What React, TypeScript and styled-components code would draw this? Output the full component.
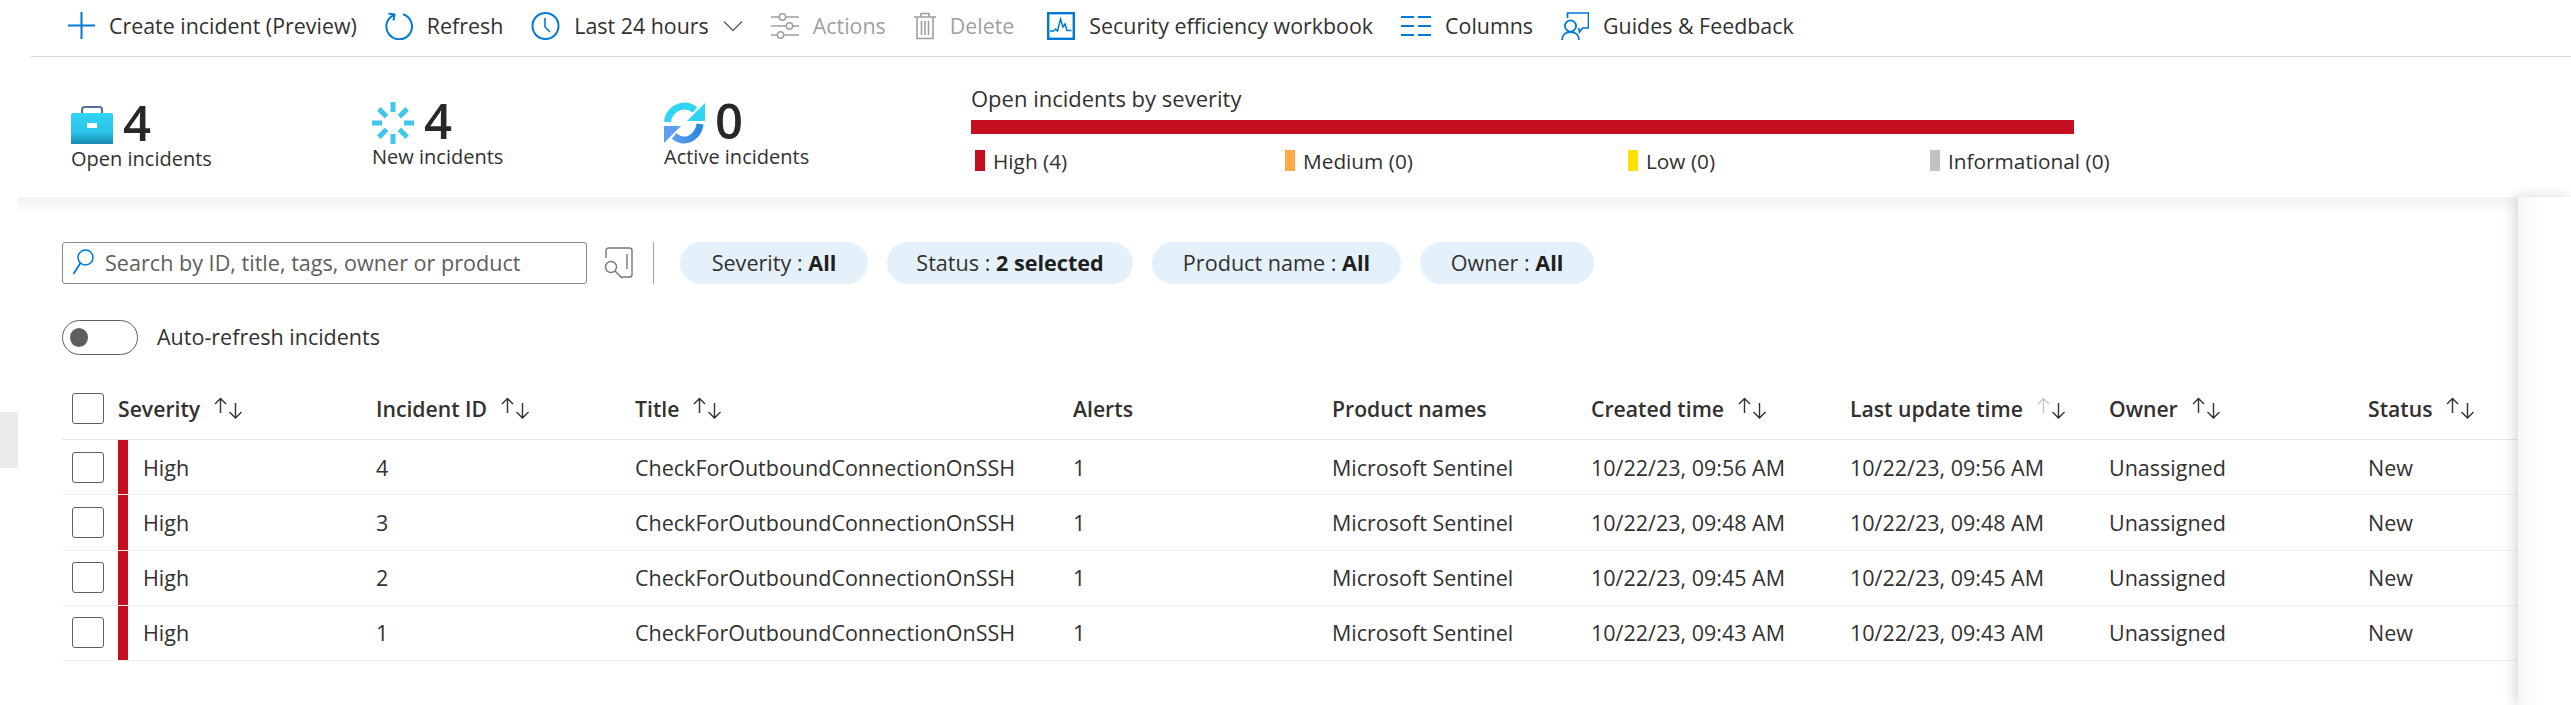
import React, { ReactNode } from 'react';
import styled, { createGlobalStyle } from 'styled-components';

const GlobalStyle = createGlobalStyle`
	html, body {
		margin: 0;
		padding: 0;
		background: #fff;
	}
	body {
		font-family: 'Open Sans', 'Noto Sans', 'Liberation Sans', sans-serif;
		color: #323130;
	}
`;

const BLUE = '#0078d4';
const GREY = '#a19f9d';

const Page = styled.div`
	width: 2571px;
	height: 705px;
	overflow: hidden;
	display: flex;
	flex-direction: column;
`;

const Toolbar = styled.div`
	height: 57px;
	margin-left: 31px;
	padding: 0 0 5px 37px;
	box-sizing: border-box;
	display: flex;
	align-items: center;
	gap: 28px;
	border-bottom: 1px solid #d9d9d9;
`;

const ToolButton = styled.div<{ $disabled?: boolean; $trail?: number }>`
	display: flex;
	align-items: center;
	gap: 14px;
	margin-right: ${props => props.$trail || 0}px;
	font-size: 21.4px;
	white-space: nowrap;
	color: ${props => (props.$disabled ? GREY : '#323130')};
	svg {
		display: block;
		flex: none;
	}
`;

const SummaryBand = styled.div`
	height: 140px;
	display: flex;
	padding-left: 71px;
`;

const Stat = styled.div<{ $width: number; $top: number }>`
	width: ${props => props.$width}px;
	padding-top: ${props => props.$top}px;
	box-sizing: border-box;
`;

const StatTop = styled.div`
	display: flex;
	align-items: center;
	gap: 10px;
	height: 46px;
`;

const StatNumber = styled.div`
	font-size: 49px;
	font-weight: 550;
	line-height: 46px;
	padding-bottom: 6px;
	color: #292827;
`;

const StatLabel = styled.div`
	font-size: 20px;
	line-height: 24px;
	margin-top: -1px;
	white-space: nowrap;
`;

const SeverityChart = styled.div`
	padding-top: 28px;
`;

const ChartTitle = styled.div`
	font-size: 22px;
	font-weight: 500;
	line-height: 26px;
`;

const ChartBar = styled.div`
	width: 1103px;
	height: 14px;
	margin-top: 9px;
	background: #c50f1f;
`;

const Legend = styled.div`
	display: flex;
	margin-top: 16px;
	padding-left: 4px;
`;

const LegendItem = styled.div<{ $width: number }>`
	width: ${props => props.$width}px;
	display: flex;
	align-items: center;
	gap: 8px;
	font-size: 20.8px;
	height: 21px;
	white-space: nowrap;
`;

const Swatch = styled.span<{ $color: string }>`
	width: 10px;
	height: 21px;
	background: ${props => props.$color};
`;

const Body = styled.div`
	flex: 1;
	display: flex;
	min-height: 0;
`;

const Gutter = styled.div`
	width: 18px;
	padding-top: 215px;
	flex: none;
`;

const GutterTab = styled.div`
	height: 56px;
	background: #edebe9;
`;

const Content = styled.div`
	width: 2500px;
	flex: none;
	padding: 45px 0 0 44px;
	box-sizing: border-box;
	background: linear-gradient(#f3f3f3, #fff 18px);
`;

const Rail = styled.div`
	flex: 1;
	position: relative;
	box-shadow: -3px 0 12px rgba(0, 0, 0, 0.16);
	background: linear-gradient(to right, #f6f6f6, #fbfbfb 10px, #fff 26px);
`;

const FilterRow = styled.div`
	display: flex;
	align-items: center;
	height: 42px;
`;

const SearchBox = styled.div`
	width: 525px;
	height: 42px;
	box-sizing: border-box;
	border: 1px solid #8a8886;
	border-radius: 3px;
	display: flex;
	align-items: center;
	gap: 11px;
	padding: 0 0 2px 9px;
	font-size: 21.6px;
	color: #605e5c;
	white-space: nowrap;
`;

const QueryIcon = styled.div`
	margin-left: 17px;
	display: flex;
`;

const FilterDivider = styled.div`
	width: 1px;
	height: 42px;
	background: #a19f9d;
	margin: 0 26px 0 19px;
`;

const Pills = styled.div`
	display: flex;
	gap: 19px;
`;

const Pill = styled.div<{ $width: number }>`
	width: ${props => props.$width}px;
	height: 42px;
	box-sizing: border-box;
	padding-bottom: 2px;
	border-radius: 21px;
	background: #e5f1fa;
	display: flex;
	align-items: center;
	justify-content: center;
	font-size: 21.6px;
	white-space: pre;
	b {
		font-weight: 700;
		color: #201f1e;
	}
`;

const ToggleRow = styled.div`
	display: flex;
	align-items: center;
	gap: 19px;
	height: 35px;
	margin-top: 36px;
	font-size: 21.5px;
`;

const ToggleLabel = styled.span`
	padding-bottom: 2px;
`;

const ToggleTrack = styled.div`
	width: 76px;
	height: 35px;
	box-sizing: border-box;
	border: 1px solid #605e5c;
	border-radius: 18px;
	display: flex;
	align-items: center;
	padding-left: 7px;
`;

const ToggleThumb = styled.div`
	width: 18px;
	height: 19px;
	border-radius: 50%;
	background: #605e5c;
`;

const COLUMNS = '56px 258px 259px 438px 259px 259px 259px 259px 259px 150px';

const HeaderRow = styled.div`
	display: grid;
	grid-template-columns: ${COLUMNS};
	height: 63px;
	margin-top: 22px;
	box-sizing: border-box;
	border-bottom: 1px solid #e8e8e8;
	align-items: center;
	font-size: 21.2px;
	font-weight: 600;
`;

const HeaderCell = styled.div`
	display: flex;
	align-items: center;
	gap: 13px;
	white-space: nowrap;
`;

const TableRow = styled.div`
	display: grid;
	grid-template-columns: ${COLUMNS};
	height: 55.25px;
	box-sizing: border-box;
	border-bottom: 1px solid #f0f0f0;
	align-items: center;
	font-size: 21.5px;
	white-space: nowrap;
`;

const CheckCell = styled.div`
	padding-left: 10px;
	display: flex;
	align-items: center;
`;

const CheckBox = styled.div`
	width: 32px;
	height: 31px;
	box-sizing: border-box;
	border: 1px solid #605e5c;
	border-radius: 3px;
`;

const SeverityCell = styled.div`
	align-self: stretch;
	display: flex;
	align-items: center;
	gap: 15px;
`;

const SeverityBar = styled.span`
	width: 10px;
	align-self: stretch;
	background: #c50f1f;
`;

function Icon(props: { w?: number; h?: number; children: ReactNode }) {
	const w = props.w || 28;
	const h = props.h || 28;
	return (
		<svg width={w} height={h} viewBox={`0 0 ${w} ${h}`} fill="none">
			{props.children}
		</svg>
	);
}

function SortArrows(props: { faded?: boolean }) {
	return (
		<svg width="30" height="22" viewBox="0 0 30 22" fill="none" strokeWidth="1.4">
			<path
				d="M7.5 16V1.5M2 7l5.5-5.5L13 7"
				stroke={props.faded ? '#c8c6c4' : '#323130'}
			/>
			<path d="M22.5 6v15M16.5 15l6 6 6-6" stroke="#323130" />
		</svg>
	);
}

const toolItems: {
	label: string;
	disabled?: boolean;
	trail?: number;
	icon: ReactNode;
	after?: ReactNode;
}[] = [
	{
		label: 'Create incident (Preview)',
		icon: (
			<Icon w={27}>
				<path d="M0 13.5h27M13.5 0v27" stroke={BLUE} strokeWidth="2" />
			</Icon>
		),
	},
	{
		label: 'Refresh',
		icon: (
			<Icon>
				<path d="M9 2.8A12.8 12.8 0 1 0 18 2.3" stroke={BLUE} strokeWidth="2" />
				<path d="M3.5 1.5 9.5 2.6 8.5 8.5" stroke={BLUE} strokeWidth="2" />
			</Icon>
		),
	},
	{
		label: 'Last 24 hours',
		icon: (
			<Icon w={29}>
				<circle cx="14.5" cy="14" r="13" stroke={BLUE} strokeWidth="2" />
				<path d="M14 6v9l5 5" stroke={BLUE} strokeWidth="1.6" />
			</Icon>
		),
		after: (
			<Icon w={20} h={12}>
				<path d="M1 1.5l9 9 9-9" stroke="#605e5c" strokeWidth="1.4" />
			</Icon>
		),
	},
	{
		label: 'Actions',
		disabled: true,
		icon: (
			<Icon>
				<path
					d="M0 5h8M15 5h13M0 14h15M22 14h6M0 23h6M13 23h15"
					stroke={GREY}
					strokeWidth="1.5"
				/>
				<circle cx="11.5" cy="5" r="3.2" stroke={GREY} strokeWidth="1.5" />
				<circle cx="18.5" cy="14" r="3.2" stroke={GREY} strokeWidth="1.5" />
				<circle cx="9.5" cy="23" r="3.2" stroke={GREY} strokeWidth="1.5" />
			</Icon>
		),
	},
	{
		label: 'Delete',
		disabled: true,
		trail: 5,
		icon: (
			<Icon w={22}>
				<path
					d="M0 5h22M7 5V1.500h8V5M3 5v21.500h16V5M7.500 9v14M11 9v14M14.500 9v14"
					stroke={GREY}
					strokeWidth="1.6"
				/>
			</Icon>
		),
	},
	{
		label: 'Security efficiency workbook',
		icon: (
			<Icon>
				<rect x="1.2" y="1.2" width="25.6" height="25.6" stroke={BLUE} strokeWidth="2.4" />
				<path d="M3 19h3.500l2-2 2 2 3-12 2.500 8 2-3 2 6.500h4.500" stroke={BLUE} strokeWidth="1.5" />
			</Icon>
		),
	},
	{
		label: 'Columns',
		icon: (
			<Icon w={30}>
				<path d="M0 5h13M17 5h13M0 14h13M17 14h13M0 23h13M17 23h13" stroke={BLUE} strokeWidth="2" />
			</Icon>
		),
	},
	{
		label: 'Guides & Feedback',
		icon: (
			<Icon>
				<path d="M6.500 6V1h21v15h-6l-3 4-1-4" stroke={BLUE} strokeWidth="1.7" />
				<circle cx="9.500" cy="14" r="5.600" stroke={BLUE} strokeWidth="1.8" />
				<path d="M1 28c0-5 3.500-8 8.500-8s8.500 3 8.500 8" stroke={BLUE} strokeWidth="1.8" />
			</Icon>
		),
	},
];

const legendItems = [
	{ label: 'High (4)', color: '#c50f1f', width: 310 },
	{ label: 'Medium (0)', color: '#ffaa44', width: 343 },
	{ label: 'Low (0)', color: '#fce100', width: 302 },
	{ label: 'Informational (0)', color: '#c2c2c2', width: 200 },
];

const pills = [
	{ name: 'Severity', value: 'All', width: 188 },
	{ name: 'Status', value: '2 selected', width: 246 },
	{ name: 'Product name', value: 'All', width: 249 },
	{ name: 'Owner', value: 'All', width: 174 },
];

const headers = [
	'Incident ID',
	'Title',
	'Alerts',
	'Product names',
	'Created time',
	'Last update time',
	'Owner',
	'Status',
];

const unsorted = ['Alerts', 'Product names'];

const incidents = [
	{ id: 4, time: '10/22/23, 09:56 AM' },
	{ id: 3, time: '10/22/23, 09:48 AM' },
	{ id: 2, time: '10/22/23, 09:45 AM' },
	{ id: 1, time: '10/22/23, 09:43 AM' },
];

function Briefcase() {
	return (
		<svg width="42" height="38" viewBox="0 0 42 38" fill="none">
			<defs>
				<linearGradient id="caseFill" x1="0" y1="0" x2="0" y2="1">
					<stop offset="0" stopColor="#32d4f5" />
					<stop offset="0.6" stopColor="#2ac4e8" />
					<stop offset="1" stopColor="#198ab3" />
				</linearGradient>
			</defs>
			<path d="M11 7V3.500C11 2 12 1 13.500 1h15C30 1 31 2 31 3.500V7" stroke="#546f9f" strokeWidth="2" />
			<path d="M2 7h38a2 2 0 0 1 2 2v29H0V9a2 2 0 0 1 2-2z" fill="url(#caseFill)" />
			<rect x="16" y="17" width="10" height="5" fill="#fff" />
		</svg>
	);
}

function Spinner() {
	const rays = [0, 45, 90, 135, 180, 225, 270, 315];
	return (
		<svg width="42" height="42" viewBox="0 0 42 42">
			{rays.map(angle => (
				<rect
					key={angle}
					x="18.5"
					y={angle % 90 === 0 ? 0 : 1}
					width="5"
					height={angle % 90 === 0 ? 10 : 11}
					fill="#40c8ea"
					transform={`rotate(${angle} 21 21)`}
				/>
			))}
		</svg>
	);
}

function SyncIcon() {
	return (
		<svg width="41" height="42" viewBox="0 0 41 42" fill="none">
			<defs>
				<linearGradient id="syncLower" x1="0" y1="0" x2="1" y2="0">
					<stop offset="0" stopColor="#5ea0ef" />
					<stop offset="1" stopColor="#2a86e0" />
				</linearGradient>
			</defs>
			<path d="M3.500 20C4 11 12 4 21 4c4 0 7 1.500 10 4" stroke="#32d4f5" strokeWidth="7" />
			<path d="M41 1v18H23z" fill="#32d4f5" />
			<path d="M36 22c-1 9-8 16-16 16-4 0-7-1.500-10-4" stroke="url(#syncLower)" strokeWidth="7" />
			<path d="M0 41V24h17z" fill="#5ea0ef" />
		</svg>
	);
}

export default function App() {
	return (
		<Page>
			<GlobalStyle />
			<Toolbar>
				{toolItems.map(item => (
					<ToolButton key={item.label} $disabled={item.disabled} $trail={item.trail}>
						{item.icon}
						<span>{item.label}</span>
						{item.after}
					</ToolButton>
				))}
			</Toolbar>
			<SummaryBand>
				<Stat $width={301} $top={45}>
					<StatTop>
						<Briefcase />
						<StatNumber>4</StatNumber>
					</StatTop>
					<StatLabel>Open incidents</StatLabel>
				</Stat>
				<Stat $width={292} $top={43}>
					<StatTop>
						<Spinner />
						<StatNumber>4</StatNumber>
					</StatTop>
					<StatLabel>New incidents</StatLabel>
				</Stat>
				<Stat $width={307} $top={43}>
					<StatTop>
						<SyncIcon />
						<StatNumber>0</StatNumber>
					</StatTop>
					<StatLabel>Active incidents</StatLabel>
				</Stat>
				<SeverityChart>
					<ChartTitle>Open incidents by severity</ChartTitle>
					<ChartBar />
					<Legend>
						{legendItems.map(item => (
							<LegendItem key={item.label} $width={item.width}>
								<Swatch $color={item.color} />
								{item.label}
							</LegendItem>
						))}
					</Legend>
				</SeverityChart>
			</SummaryBand>
			<Body>
				<Gutter>
					<GutterTab />
				</Gutter>
				<Content>
					<FilterRow>
						<SearchBox>
							<Icon w={22} h={28}>
								<circle cx="13.5" cy="9.5" r="7.5" stroke={BLUE} strokeWidth="1.5" />
								<path d="M8.500 15 1.500 26" stroke={BLUE} strokeWidth="1.8" />
							</Icon>
							Search by ID, title, tags, owner or product
						</SearchBox>
						<QueryIcon>
							<Icon w={30} h={32}>
								<path
									d="M2 11V3.500C2 2 3 1 4.500 1h21C27 1 28 2 28 3.500v24c0 1.500-1 2.500-2.500 2.500H18"
									stroke="#797775"
									strokeWidth="1.4"
								/>
								<path d="M23 7v15" stroke="#797775" strokeWidth="1.4" />
								<circle cx="7" cy="20" r="5.500" stroke="#797775" strokeWidth="1.4" />
								<path d="M11 24l7 7" stroke="#797775" strokeWidth="1.6" />
							</Icon>
						</QueryIcon>
						<FilterDivider />
						<Pills>
							{pills.map(pill => (
								<Pill key={pill.name} $width={pill.width}>
									{pill.name} : <b>{pill.value}</b>
								</Pill>
							))}
						</Pills>
					</FilterRow>
					<ToggleRow>
						<ToggleTrack>
							<ToggleThumb />
						</ToggleTrack>
						<ToggleLabel>Auto-refresh incidents</ToggleLabel>
					</ToggleRow>
					<HeaderRow>
						<CheckCell>
							<CheckBox />
						</CheckCell>
						<HeaderCell>
							Severity
							<SortArrows />
						</HeaderCell>
						{headers.map(title => (
							<HeaderCell key={title}>
								{title}
								{!unsorted.includes(title) && (
									<SortArrows faded={title === 'Last update time'} />
								)}
							</HeaderCell>
						))}
					</HeaderRow>
					{incidents.map(row => (
						<TableRow key={row.id}>
							<CheckCell>
								<CheckBox />
							</CheckCell>
							<SeverityCell>
								<SeverityBar />
								High
							</SeverityCell>
							<div>{row.id}</div>
							<div>CheckForOutboundConnectionOnSSH</div>
							<div>1</div>
							<div>Microsoft Sentinel</div>
							<div>{row.time}</div>
							<div>{row.time}</div>
							<div>Unassigned</div>
							<div>New</div>
						</TableRow>
					))}
				</Content>
				<Rail />
			</Body>
		</Page>
	);
}
